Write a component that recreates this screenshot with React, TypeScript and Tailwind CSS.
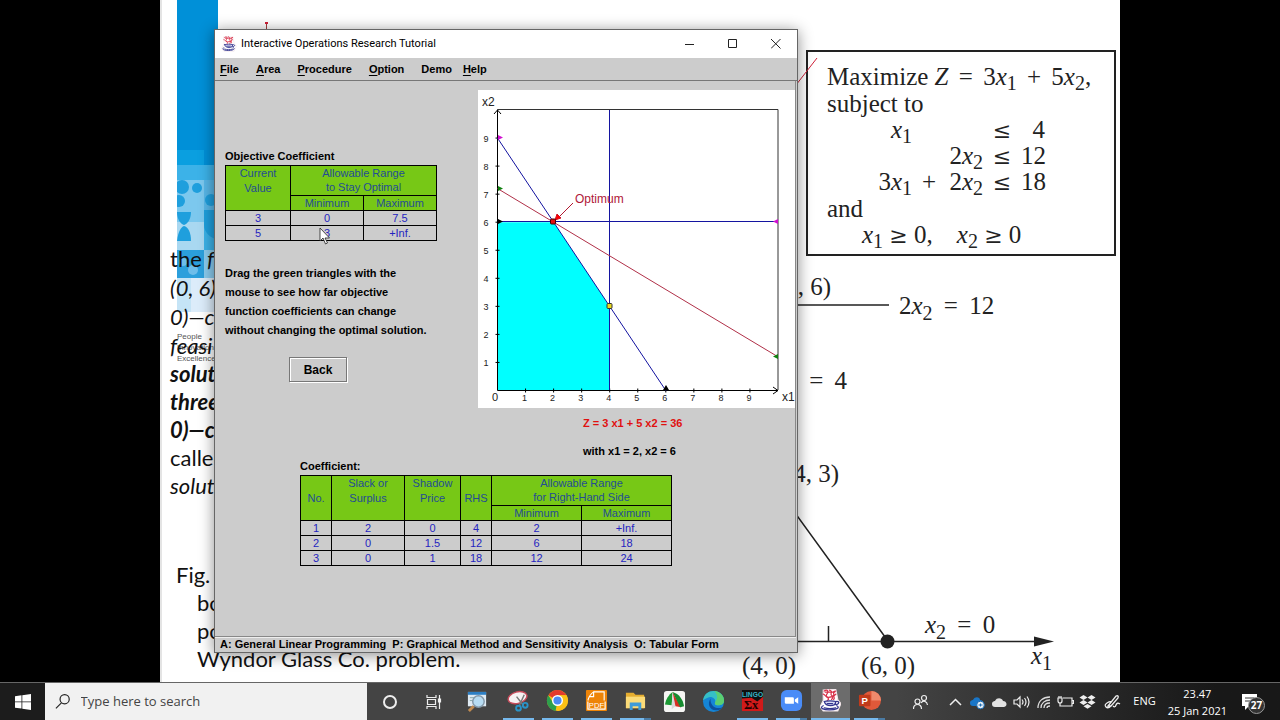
import React from "react";

const COEFFICIENTS = [
  ["3", "0", "7.5"],
  ["5", "3", "+Inf."],
];

const CONSTRAINTS = [
  ["1", "2", "0", "4", "2", "+Inf."],
  ["2", "0", "1.5", "12", "6", "18"],
  ["3", "0", "1", "18", "12", "24"],
];

const TICKS = [1, 2, 3, 4, 5, 6, 7, 8, 9];

// chart origin and pixels per unit
const OX = 19.5;
const OY = 300.5;
const UNIT = 28.05;
const px = (x: number) => OX + x * UNIT;
const py = (y: number) => OY - y * UNIT;

function JavaIcon({ className }: { className?: string }) {
  return (
    <svg viewBox="0 0 20 22" className={className} fill="none" strokeLinecap="round">
      <path d="M3 1l12-1 2 10 3 4-3 7H3l-3-4 3-6z" fill="#fff" stroke="#f3e6ea" />
      <g stroke="#d8324a" strokeWidth="1.2">
        <path d="M4 2c3-2 4 0 3 2s-2 2 0 4 1 2 0 3" />
        <path d="M9 1c4 1 0 4 2 5s1 3 0 4" />
        <path d="M15 2c-4 0-1 3-2 4s2 2 0 4" />
        <path d="M3 5c2 0 2 3 5 3s5-1 7-3M5 3h9" />
      </g>
      <g stroke="#34368e" strokeWidth="1.2">
        <path d="M4 12c2-1 9-1 11 0 0 3-2 4-5 4s-5-1-6-4z" fill="#d9dcf3" />
        <path d="M15 12c4-1 4 3-1 3" />
        <path d="M7 14h5" />
        <path d="M3 16c-4 2 0 4 6 4s11-2 7-4" />
        <path d="M4 18c4 1 7 1 11 0" />
      </g>
    </svg>
  );
}

function Var({ n }: { n: number }) {
  return (
    <>
      <i>x</i>
      <sub className="text-[20px]">{n}</sub>
    </>
  );
}

function Op({ children }: { children: string }) {
  return <span className="mx-1">{children}</span>;
}

function Rel({ children }: { children: string }) {
  return <span className="font-['DejaVu_Serif',serif] text-[22px] leading-none">{children}</span>;
}

function SvgVar({ n }: { n: number }) {
  return (
    <>
      <tspan fontStyle="italic">x</tspan>
      <tspan fontSize="20" dy="6">{n}</tspan>
    </>
  );
}

function Banner() {
  return (
    <svg className="absolute left-[15px] top-0" width="50" height="366" viewBox="0 0 50 366">
      <rect width="41" height="312" fill="#0090d8" />
      <rect y="150" width="27" height="15" fill="#0a9fe0" />
      <rect y="165" width="41" height="85" fill="#3cb2e8" />
      <rect y="180" width="27" height="42" fill="#7cc8ee" />
      <rect x="27" y="180" width="14" height="45" fill="#58b7e8" />
      <rect y="222" width="27" height="30" fill="#a9d8f1" />
      <g fill="#1f9fdd">
        <circle cx="5" cy="187" r="7" />
        <circle cx="20" cy="188" r="5" />
        <circle cx="34" cy="200" r="6" />
        <circle cx="2" cy="201" r="6" />
        <path d="M0 212h14c0 8-4 12-7 13-3-1-7-5-7-13z" />
        <path d="M0 241c1-9 4-14 7-15 4 1 7 6 7 15z" />
        <path d="M27 210h14v30c-8-2-14-8-14-15z" />
      </g>
      <rect y="250" width="27" height="28" fill="#2b9fdc" />
      <rect x="27" y="250" width="14" height="28" fill="#8acbee" />
      <rect y="278" width="41" height="34" fill="#c5e4f6" />
      <rect x="14" y="278" width="27" height="34" fill="#dcecfa" />
      <g fill="#6dbdea">
        <circle cx="16" cy="270" r="5" />
        <circle cx="6" cy="262" r="4" />
      </g>
      <g fill="#555" fontFamily="Liberation Sans, sans-serif" fontSize="8">
        <text x="0" y="339">People</text>
        <text x="0" y="350">Innovation</text>
        <text x="0" y="361">Excellence</text>
      </g>
    </svg>
  );
}

function Figure() {
  return (
    <svg
      width="380"
      height="426"
      viewBox="0 0 380 426"
      fill="#222"
      fontFamily="Liberation Serif, serif"
      fontSize="25"
    >
      <path d="M50 49h99M50 250l98 135M50 385.500h255M88.500 370v15" stroke="#222" strokeWidth="1.500" fill="none" />
      <circle cx="147.500" cy="385.500" r="7" />
      <path d="M294 380.500l20 5-20 5z" />
      <text x="91" y="39" textAnchor="end">(2, 6)</text>
      <text x="159" y="58">
        2<SvgVar n={2} />
        <tspan dy="-6">{" \u2009=\u2009 12"}</tspan>
      </text>
      <text x="107" y="133" textAnchor="end">{"=\u2009 4"}</text>
      <text x="99" y="226" textAnchor="end">(4, 3)</text>
      <text x="185" y="377">
        <SvgVar n={2} />
        <tspan dy="-6">{" \u2009=\u2009 0"}</tspan>
      </text>
      <text x="2" y="418">(4, 0)</text>
      <text x="121" y="418">(6, 0)</text>
      <text x="291" y="408"><SvgVar n={1} /></text>
    </svg>
  );
}

function ModelBox() {
  return (
    <div className="mt-[50px] ml-[66px] mr-1 h-[206px] border-2 border-[#222] pl-[19px] pt-[11px] font-['Liberation_Serif',serif] text-[25px] leading-[27px] text-[#222]">
      <p className="whitespace-nowrap">
        Maximize <i>Z</i> <Op>=</Op> 3<Var n={1} /> <Op>+</Op> 5<Var n={2} />,
      </p>
      <p>subject to</p>
      <div className="grid grid-cols-[85px_34px_37px_38px_24px] text-right leading-[26px] whitespace-nowrap">
        <span><Var n={1} /></span>
        <span className="col-start-4 text-center"><Rel>≤</Rel></span>
        <span>4</span>
        <span className="col-start-3">2<Var n={2} /></span>
        <span className="text-center"><Rel>≤</Rel></span>
        <span>12</span>
        <span>3<Var n={1} /></span>
        <span className="text-center">+</span>
        <span>2<Var n={2} /></span>
        <span className="text-center"><Rel>≤</Rel></span>
        <span>18</span>
      </div>
      <p>and</p>
      <p className="flex gap-6 pl-[35px] leading-[26px]">
        <span><Var n={1} /> <Rel>≥</Rel> 0,</span>
        <span><Var n={2} /> <Rel>≥</Rel> 0</span>
      </p>
    </div>
  );
}

function Slide() {
  return (
    <main className="relative mx-auto flex w-3/4 overflow-hidden border-l-2 border-[#e4e4e4] bg-white">
      <Banner />
      <div className="relative flex-1 pl-2 font-['Lato',sans-serif] text-[22px] whitespace-nowrap text-[#111]">
        <div className="pt-[244px] leading-[29px] italic">
          <p><span className="not-italic">the</span> f</p>
          <p>(0, 6)</p>
          <p>0)—c</p>
          <p>feasi</p>
        </div>
        <div className="leading-7 italic">
          <p className="font-bold">solut</p>
          <p className="font-bold">three</p>
          <p className="font-bold">0)—c</p>
          <p className="not-italic">called</p>
          <p>solut</p>
        </div>
        <div className="pt-[61px] pl-[27px] leading-7">
          <p className="-ml-[21px]">Fig.</p>
          <p>bo</p>
          <p>po</p>
          <p>Wyndor Glass Co. problem.</p>
        </div>
      </div>
      <div className="w-[380px]">
        <ModelBox />
        <Figure />
      </div>
      <svg className="absolute left-[100px] top-5" width="560" height="66" viewBox="0 0 560 66" fill="none" stroke="#d02038">
        <path d="M4.500 2v10" stroke="#a04040" />
        <path d="M3 3h3" strokeWidth="2" />
        <path d="M534 65l21-27" />
      </svg>
    </main>
  );
}

function Chart() {
  return (
    <svg
      width="317"
      height="318"
      viewBox="0 0 317 318"
      className="bg-white font-normal"
      fontFamily="Liberation Sans, sans-serif"
    >
      <path
        d={`M${px(0)} ${py(0)}V${py(6)}H${px(2)}L${px(4)} ${py(3)}V${py(0)}z`}
        fill="#00ffff"
      />
      <path d="M19.500 19.500H300V300" fill="none" stroke="#333" />
      <path d="M19.500 19.500V300.500H300" fill="none" stroke="#000" />
      <path d="M16 24l3.500-4 3.500 4M295 297l5 3.500-5 3.500" fill="none" stroke="#000" />
      {TICKS.map((t) => (
        <g key={t} fontSize="9" fill="#222" textAnchor="middle">
          <path d={`M${px(0) - 2} ${py(t)}h4M${px(t)} ${py(0) - 2}v4`} stroke="#000" />
          <text x="8" y={py(t) + 4}>{t}</text>
          <text x={px(t) - 1} y="311">{t}</text>
        </g>
      ))}
      <g fill="none" stroke="#1414a0">
        <path d="M131.500 20V300" />
        <path d="M20 131.500H300" />
        <path d={`M${px(0)} ${py(9)}L${px(6)} ${py(0)}`} />
      </g>
      <path d={`M${px(0)} ${py(7.2)}L${px(10)} ${py(1.2)}`} stroke="#b03048" />
      <path d="M95 113L80 128" stroke="#b01830" />
      <path d="M77 130l2-6 4 4z" fill="#f00" stroke="#d01020" />
      <path d="M20 45v5l5-2.500z" fill="#d010d0" />
      <path d="M300 129v5l-5-2.500z" fill="#d010d0" />
      <path d="M20 96v5l5-2.500z" fill="#108010" />
      <path d="M300 264v5l-5-2.500z" fill="#108010" />
      <path d="M20 129v5l5-2.500z" fill="#000" />
      <path d="M185 300l3-5 3 5z" fill="#000" />
      <rect x="72.500" y="129" width="5" height="5" rx="1" fill="#e01010" stroke="#400" />
      <rect x="129" y="213.500" width="5" height="5" rx="1" fill="#e8d820" stroke="#333" />
      <g fontSize="12" fill="#222">
        <text x="4" y="16">x2</text>
        <text x="304" y="311">x1</text>
        <text x="14" y="311" fontSize="11">0</text>
        <text x="97" y="113" fill="#b01838">Optimum</text>
      </g>
    </svg>
  );
}

const cell = "border border-black p-0 font-normal";

function ObjectiveTable() {
  return (
    <table className="mt-[2px] w-[212px] table-fixed border-collapse text-center text-[11px] leading-[14px] text-[#2424c0]">
      <colgroup>
        <col className="w-[65px]" />
        <col className="w-[73px]" />
        <col className="w-[73px]" />
      </colgroup>
      <thead className="bg-[#77c816] text-[#234d94]">
        <tr className="h-[30px]">
          <th rowSpan={2} className={`${cell} align-top leading-[15px]`}>Current<br />Value</th>
          <th colSpan={2} className={`${cell} align-top`}>Allowable Range<br />to Stay Optimal</th>
        </tr>
        <tr>
          <th className={cell}>Minimum</th>
          <th className={cell}>Maximum</th>
        </tr>
      </thead>
      <tbody>
        {COEFFICIENTS.map((row) => (
          <tr key={row[0]}>
            {row.map((value, i) => (
              <td key={i} className={cell}>{value}</td>
            ))}
          </tr>
        ))}
      </tbody>
    </table>
  );
}

function CoefficientTable() {
  return (
    <table className="mt-[2px] w-[372px] table-fixed border-collapse text-center text-[11px] leading-[14px] text-[#2424c0]">
      <colgroup>
        <col className="w-[31px]" />
        <col className="w-[73px]" />
        <col className="w-[56px]" />
        <col className="w-[31px]" />
        <col className="w-[90px]" />
        <col className="w-[90px]" />
      </colgroup>
      <thead className="bg-[#77c816] text-[#234d94]">
        <tr className="h-[30px]">
          <th rowSpan={2} className={cell}>No.</th>
          <th rowSpan={2} className={`${cell} align-top leading-[15px]`}>Slack or<br />Surplus</th>
          <th rowSpan={2} className={`${cell} align-top leading-[15px]`}>Shadow<br />Price</th>
          <th rowSpan={2} className={cell}>RHS</th>
          <th colSpan={2} className={`${cell} align-top`}>Allowable Range<br />for Right-Hand Side</th>
        </tr>
        <tr>
          <th className={cell}>Minimum</th>
          <th className={cell}>Maximum</th>
        </tr>
      </thead>
      <tbody>
        {CONSTRAINTS.map((row) => (
          <tr key={row[0]}>
            {row.map((value, i) => (
              <td key={i} className={cell}>{value}</td>
            ))}
          </tr>
        ))}
      </tbody>
    </table>
  );
}

function MenuItem({ label, plain }: { label: string; plain?: boolean }) {
  return (
    <button type="button" className="leading-4">
      {plain ? label : <><span className="underline underline-offset-2">{label[0]}</span>{label.slice(1)}</>}
    </button>
  );
}

function TutorialWindow() {
  return (
    <section className="absolute left-[214px] top-[29px] w-[584px] border border-[#666] bg-[#ccc] font-['Liberation_Sans',sans-serif] text-[11px] font-bold text-black shadow-[0_2px_14px_rgba(0,0,0,0.45)]">
      <header className="flex h-7 items-center bg-white pl-1.5 font-normal">
        <JavaIcon className="h-4 w-4" />
        <h1 className="ml-1 flex-1 font-['Roboto',sans-serif] text-[11px]">Interactive Operations Research Tutorial</h1>
        <button type="button" aria-label="Minimize" className="flex w-[43px] justify-center">
          <svg width="10" height="10" stroke="#222"><path d="M0 5.500h9" /></svg>
        </button>
        <button type="button" aria-label="Maximize" className="flex w-[43px] justify-center">
          <svg width="10" height="10" stroke="#222" fill="none"><path d="M.5.500h8v8h-8z" /></svg>
        </button>
        <button type="button" aria-label="Close" className="flex w-[43px] justify-center">
          <svg width="10" height="10" stroke="#222"><path d="M0 0l9.500 9.500M9.500 0L0 9.500" /></svg>
        </button>
      </header>
      <nav className="flex h-[23px] items-center gap-[17px] border-b border-[#777] pl-[5px]">
        <MenuItem label="File" />
        <MenuItem label="Area" />
        <MenuItem label="Procedure" />
        <MenuItem label="Option" />
        <div className="flex gap-[11px]">
          <MenuItem label="Demo" plain />
          <MenuItem label="Help" />
        </div>
      </nav>
      <div className="mr-px border-r border-[#888] pb-[70px]">
        <div className="flex">
          <div className="flex-1 pl-2.5 pt-[68px]">
            <h2 className="leading-[14px]">Objective Coefficient</h2>
            <ObjectiveTable />
            <p className="mt-[23px] leading-[19px]">
              Drag the green triangles with the<br />
              mouse to see how far objective<br />
              function coefficients can change<br />
              without changing the optimal solution.
            </p>
            <button
              type="button"
              className="mt-[17px] ml-16 h-[25px] w-[58px] border border-[#777] text-[12px] shadow-[inset_1px_1px_0_#fff,1px_1px_0_#fff]"
            >
              Back
            </button>
          </div>
          <div className="pt-[9px]">
            <Chart />
            <div className="pl-[105px] leading-4">
              <p className="mt-[7px] text-[#e01010]">Z = 3 x1 + 5 x2 = 36</p>
              <p className="mt-3">with x1 = 2, x2 = 6</p>
            </div>
          </div>
        </div>
        <div className="pl-[85px]">
          <h2 className="leading-[14px]">Coefficient:</h2>
          <CoefficientTable />
        </div>
      </div>
      <footer className="mr-px border-t border-[#888] pl-[5px] leading-[15px] whitespace-pre shadow-[inset_0_1px_0_#eee]">
        {"A: General Linear Programming  P: Graphical Method and Sensitivity Analysis  O: Tabular Form"}
      </footer>
      <svg className="absolute left-[104px] top-[197px]" width="12" height="18" viewBox="0 0 12 18">
        <path d="M1 1v13l3-3 2.500 6 2-1-2.500-5h4.500z" fill="#fff" stroke="#222" strokeWidth=".8" />
      </svg>
    </section>
  );
}

const APPS = [
  {
    name: "Magnifier",
    wide: true,
    bar: "none",
    icon: (
      <>
        <path d="M2 2h19v15H2z" fill="#dfeaf3" />
        <path d="M2 2h19v3H2z" fill="#2d7fc4" />
        <path d="M4 8h7M4 11h5" stroke="#8aa" />
        <path d="M8 17l-5 5" stroke="#c08a50" strokeWidth="3" />
        <circle cx="13" cy="12" r="6" fill="#b7dcf2" stroke="#8498a8" strokeWidth="1.500" />
      </>
    ),
  },
  {
    name: "Snipping Tool",
    bar: "full",
    icon: (
      <>
        <ellipse cx="11" cy="9" rx="10" ry="6" fill="#f6f1f2" stroke="#c74a5a" strokeWidth="1.500" transform="rotate(-15 11 9)" />
        <path d="M10 8l7 9M18 6l-5 11" stroke="#777" strokeWidth="1.500" />
        <g fill="none" stroke="#2a93c8" strokeWidth="2">
          <circle cx="12" cy="20" r="2.500" />
          <circle cx="19" cy="17" r="2.500" />
        </g>
      </>
    ),
  },
  {
    name: "Chrome",
    bar: "full",
    icon: (
      <>
        <circle cx="12" cy="12" r="11" fill="#fbc116" />
        <path d="M12 12L2.500 6.500A11 11 0 0 1 21.500 6.500H12z" fill="#e33b2e" />
        <path d="M12 12l-2 11A11 11 0 0 1 2.500 6.500L7.500 14.500z" fill="#2da04c" />
        <path d="M12 6.500h9.500A11 11 0 0 1 12 23l5-9z" fill="#fbc116" />
        <circle cx="12" cy="12" r="5" fill="#4a8af4" stroke="#fff" strokeWidth="1.500" />
      </>
    ),
  },
  {
    name: "PDF",
    bar: "full",
    icon: (
      <>
        <rect x="1" y="1" width="22" height="22" rx="1" fill="#ee8408" />
        <path d="M3 12c1-4 3-7 6-9v5h-5M9 3h11v9M3 13v8h18v-8" fill="none" stroke="#fff" strokeWidth="1.200" />
        <text x="12" y="20" fontSize="8" fill="#fff" textAnchor="middle" fontFamily="Liberation Sans, sans-serif">PDF</text>
      </>
    ),
  },
  {
    name: "File Explorer",
    bar: "split",
    icon: (
      <>
        <path d="M2 4h8l2 2h9v14H2z" fill="#e5ad2f" />
        <path d="M2 8h20v12H2z" fill="#fbdb78" />
        <path d="M6 22v-8h12v8h-3v-4H9v4z" fill="#3f9bd8" />
      </>
    ),
  },
  {
    name: "FastStone",
    bar: "none",
    icon: (
      <>
        <rect x="1" y="1" width="22" height="22" rx="3" fill="#f6f6f4" />
        <path d="M10 2C6 5 3 9 2 15l7 1z" fill="#1c9a35" />
        <path d="M10 2L9 20l4-3z" fill="#d8d8d8" />
        <path d="M10 2l3 15 6 1z" fill="#d62f22" />
        <path d="M10 2c7 2 11 8 12 15l-4 1z" fill="#178c31" />
      </>
    ),
  },
  {
    name: "Edge",
    bar: "none",
    icon: (
      <>
        <circle cx="12" cy="12" r="11" fill="#1585d6" />
        <path d="M1 11C2 4 7 1 12 1c7 0 11 5 11 10 0 4-3 5-6 5-4 0-4-2-3-4 0-3-4-6-8-4-3 1-4 2-5 3z" fill="#36bfc6" />
        <path d="M13 1c7 1 10 6 10 10 0 4-3 5-6 5-4 0-4-2-3-4 3-4 2-7-1-11z" fill="#5ccf70" />
        <path d="M9 9c-4 5-1 13 7 12 2 0 4-1 5-3-6 3-13-2-12-9z" fill="#0c4f9d" />
      </>
    ),
  },
  {
    name: "Lingo",
    bar: "full",
    icon: (
      <>
        <rect x="1" y="1" width="22" height="22" fill="#d01a1a" />
        <path d="M1 1h22v7l-6 5-6-4-10 1z" fill="#101010" />
        <text x="12" y="8" fontSize="7" fontWeight="bold" fill="#35b6c8" textAnchor="middle" fontFamily="Liberation Sans, sans-serif">LINGO</text>
        <text x="3" y="21" fontSize="13" fontWeight="bold" fill="#200" fontFamily="Liberation Serif, serif">Σx</text>
      </>
    ),
  },
  {
    name: "Zoom",
    bar: "split",
    icon: (
      <>
        <rect x="1" y="1" width="22" height="22" rx="6" fill="#4a8cf7" />
        <path d="M5 8.500h8q1.500 0 1.500 1.500v5.500H6.500Q5 15.500 5 14zM15.500 11l3.500-2.500v7L15.500 13z" fill="#fff" />
      </>
    ),
  },
  { name: "Interactive Operations Research Tutorial", bar: "active", icon: null },
  {
    name: "PowerPoint",
    bar: "split",
    icon: (
      <>
        <circle cx="14" cy="12" r="10" fill="#e0593a" />
        <path d="M14 2a10 10 0 0 1 10 10H14z" fill="#f08a6c" />
        <rect x="1" y="6" width="12" height="12" rx="1" fill="#c13b1b" />
        <text x="7" y="16" fontSize="10" fontWeight="bold" fill="#fff" textAnchor="middle" fontFamily="Liberation Sans, sans-serif">P</text>
      </>
    ),
  },
];

function Taskbar() {
  return (
    <footer className="flex h-[38px] items-stretch border-t border-[#666] bg-linear-to-r from-[#444] from-70% to-[#181818] to-95% font-['Open_Sans',sans-serif] text-white">
      <button type="button" aria-label="Start" className="flex w-[45px] items-center justify-center bg-[#1c1c1c]">
        <svg width="16" height="16" viewBox="0 0 16 16" fill="#fff">
          <path d="M0 2.200l6.500-.9v6.200H0zM7.300 1.200L16 0v7.500H7.300zM0 8.300h6.500v6.300L0 13.700zM7.300 8.300H16V16l-8.700-1.200z" />
        </svg>
      </button>
      <label className="flex w-[322px] items-center bg-[#f1f1f1] pl-2.5">
        <svg width="17" height="17" viewBox="0 0 17 17" fill="none" stroke="#222" strokeWidth="1.300">
          <circle cx="10.500" cy="6" r="5" />
          <path d="M7 10l-6 6" />
        </svg>
        <input
          type="text"
          aria-label="Search"
          placeholder="Type here to search"
          className="ml-2.5 w-full bg-transparent text-[13px] outline-none placeholder:text-[#444]"
        />
      </label>
      <button type="button" aria-label="Cortana" className="flex w-[45px] items-center justify-center">
        <svg width="16" height="16" fill="none" stroke="#eee" strokeWidth="2"><circle cx="8" cy="8" r="6" /></svg>
      </button>
      <button type="button" aria-label="Task view" className="flex w-11 items-center justify-center">
        <svg width="16" height="16" fill="none" stroke="#eee" strokeWidth="1.200">
          <path d="M1 1v2.500h9V1M1.500 5.500h8v5h-8zM1 15v-2.500h9V15M13.500 1v14" />
          <path d="M12.500 5h2v3h-2z" fill="#eee" />
        </svg>
      </button>
      {APPS.map((app) => (
        <button
          key={app.name}
          type="button"
          aria-label={app.name}
          className={`flex flex-col items-center ${app.wide ? "w-[43px]" : "w-[39px]"} ${app.bar === "active" ? "bg-[#6c6c6c]" : ""}`}
        >
          <span className="flex flex-1 items-center">
            {app.icon ? <svg width="23" height="23" viewBox="0 0 24 24">{app.icon}</svg> : <JavaIcon className="h-[23px] w-[21px]" />}
          </span>
          {app.bar !== "none" && (
            <span className={`flex h-0.5 bg-[#76b9ed] ${app.bar === "active" ? "w-full" : "w-[31px]"}`}>
              {app.bar === "split" && <span className="ml-auto w-[7px] bg-[#4a7ba4]" />}
            </span>
          )}
        </button>
      ))}
      <div className="ml-auto flex items-center pr-2 text-[11px]">
        <svg width="16" height="16" fill="none" stroke="#eee" strokeWidth="1.200" className="mr-[18px]">
          <circle cx="11" cy="4" r="2.500" />
          <circle cx="4.500" cy="7.500" r="2.500" />
          <path d="M.5 15c0-6 8-6 8 0M8 9c2-3 6-2 6.500 2" />
        </svg>
        <div className="flex items-center gap-[5px]">
          <svg width="17" height="16" fill="none" stroke="#eee" strokeWidth="1.500"><path d="M3 11l5.500-5.500L14 11" /></svg>
          <svg width="17" height="16">
            <path d="M1 9c0-3 3-3 3-3 2-4 7-3 7 0 4 0 4 5 1 6H4c-2 0-3-1-3-3z" fill="#1976c8" />
            <circle cx="11.500" cy="11" r="3.800" fill="#e8f1f8" stroke="#1d6bb2" />
            <path d="M9.500 11h4M11.500 9.500v3" stroke="#1d6bb2" />
          </svg>
          <svg width="17" height="16"><path d="M1 10c0-3 3-3 3-3 2-4 7-3 8 0 4 0 5 5 1 6H4c-2 0-3-1-3-3z" fill="#e2e2e2" /></svg>
          <svg width="17" height="16" fill="none" stroke="#eee" strokeWidth="1.200">
            <path d="M1 6h3l3-3v10L4 10H1zM9 5.500q2 2.500 0 5M11.500 4q3 4 0 8M14 2.500q4 5.500 0 11" />
          </svg>
          <svg width="17" height="16" fill="none" stroke="#ddd" strokeWidth="1.300">
            <path d="M3 14C3 7 8 3 15 3M6 14c0-5 4-8 9-8M9 14c0-3 2-5 6-5M12 14c0-1 1-2 3-2" />
          </svg>
          <svg width="17" height="16" fill="none" stroke="#eee" strokeWidth="1.200">
            <path d="M6 4h9v8H5M15 6.500h1.500v3H15M1 4h4v3q0 2-2 2T1 7zM3 9v3h2M2 4V2M4 4V2" />
          </svg>
          <svg width="17" height="16" fill="#eee">
            <path d="M4.500 1l4 2.500-4 2.500-4-2.500zM12.500 1l4 2.500-4 2.500-4-2.500zM4.500 6l4 2.500-4 2.500-4-2.500zM12.500 6l4 2.500-4 2.500-4-2.500zM8.500 10l4 2.200-4 2.500-4-2.500z" />
          </svg>
        </div>
        <svg width="17" height="16" fill="none" stroke="#eee" strokeWidth="1.300" className="ml-2">
          <path d="M4 12L12 2q3-1 2 2L7 12zM7 12q-3 3-5 1t1-4 5-1M9 12q2 2 3-1t4-1" />
        </svg>
        <span className="ml-3">ENG</span>
        <time className="ml-3 text-center leading-[17px]">
          23.47<br />25 Jan 2021
        </time>
        <button type="button" aria-label="27 notifications" className="ml-3.5 flex w-[31px]">
          <svg width="26" height="24" viewBox="0 0 26 24">
            <path d="M1 4h15v12h-8l-4 4v-4H1z" fill="#fff" />
            <path d="M4 8h9M4 11h7" stroke="#333" />
            <circle cx="15.500" cy="15.500" r="8" fill="#333" stroke="#999" />
            <text x="15.500" y="19" fontSize="10" fontWeight="bold" fill="#fff" textAnchor="middle">27</text>
          </svg>
        </button>
      </div>
    </footer>
  );
}

export default function App() {
  return (
    <div className="relative flex min-h-screen flex-col bg-black">
      <div className="flex flex-1">
        <Slide />
      </div>
      <TutorialWindow />
      <Taskbar />
    </div>
  );
}
